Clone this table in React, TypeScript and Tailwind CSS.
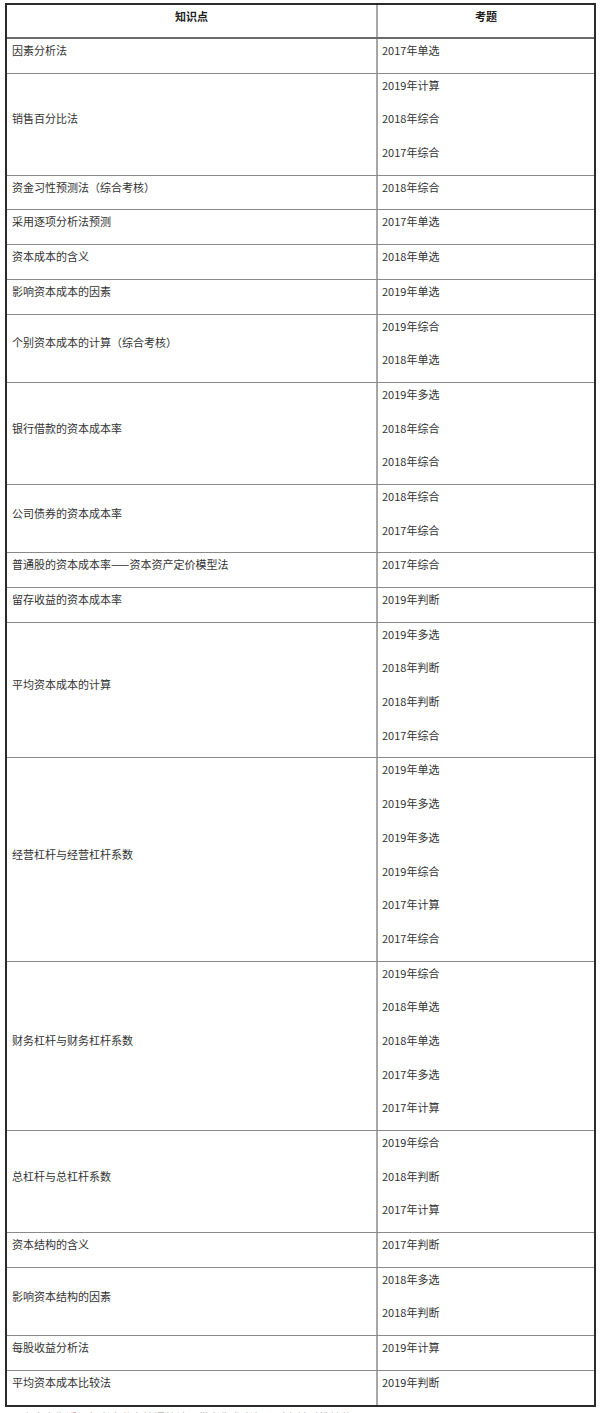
import React from "react";

type Row = { topic: string; items: string[] };

const rows: Row[] = [
  { topic: "因素分析法", items: ["2017年单选"] },
  { topic: "销售百分比法", items: ["2019年计算", "2018年综合", "2017年综合"] },
  { topic: "资金习性预测法（综合考核）", items: ["2018年综合"] },
  { topic: "采用逐项分析法预测", items: ["2017年单选"] },
  { topic: "资本成本的含义", items: ["2018年单选"] },
  { topic: "影响资本成本的因素", items: ["2019年单选"] },
  { topic: "个别资本成本的计算（综合考核）", items: ["2019年综合", "2018年单选"] },
  { topic: "银行借款的资本成本率", items: ["2019年多选", "2018年综合", "2018年综合"] },
  { topic: "公司债券的资本成本率", items: ["2018年综合", "2017年综合"] },
  { topic: "普通股的资本成本率——资本资产定价模型法", items: ["2017年综合"] },
  { topic: "留存收益的资本成本率", items: ["2019年判断"] },
  { topic: "平均资本成本的计算", items: ["2019年多选", "2018年判断", "2018年判断", "2017年综合"] },
  {
    topic: "经营杠杆与经营杠杆系数",
    items: ["2019年单选", "2019年多选", "2019年多选", "2019年综合", "2017年计算", "2017年综合"],
  },
  {
    topic: "财务杠杆与财务杠杆系数",
    items: ["2019年综合", "2018年单选", "2018年单选", "2017年多选", "2017年计算"],
  },
  { topic: "总杠杆与总杠杆系数", items: ["2019年综合", "2018年判断", "2017年计算"] },
  { topic: "资本结构的含义", items: ["2017年判断"] },
  { topic: "影响资本结构的因素", items: ["2018年多选", "2018年判断"] },
  { topic: "每股收益分析法", items: ["2019年计算"] },
  { topic: "平均资本成本比较法", items: ["2019年判断"] },
];

function Line({ children }: { children: React.ReactNode }) {
  return <div className="h-[33.7px] pt-[3px] leading-[17px] whitespace-nowrap">{children}</div>;
}

export default function App() {
  return (
    <div
      className="bg-white text-[11px] text-[#333] h-[1413px] overflow-hidden"
      style={{ fontFamily: '"Noto Sans CJK SC", "Noto Sans", sans-serif' }}
    >
      <div className="pt-[3px] pl-[5px]">
        <div className="w-[591px] border-2 border-[#2b2b2b]">
          {/* header */}
          <div className="grid grid-cols-[369px_2px_1fr] border-b-2 border-[#6a6a6a]">
            <div className="h-[32px] pt-[3px] leading-[17px] text-center font-bold text-[#222]">知识点</div>
            <div className="bg-[#a8a8a8]" />
            <div className="h-[32px] pt-[3px] leading-[17px] text-center font-bold text-[#222]">考题</div>
          </div>

          {rows.map((row, i) => (
            <div
              key={i}
              className={
                "grid grid-cols-[369px_2px_1fr] " + (i > 0 ? "border-t border-[#8a8a8a]" : "")
              }
            >
              <div className="flex items-center pl-[5px]">
                <Line>{row.topic}</Line>
              </div>
              <div className="bg-[#a8a8a8]" />
              <div className="pl-[4px]">
                {row.items.map((it, j) => (
                  <Line key={j}>{it}</Line>
                ))}
              </div>
            </div>
          ))}
        </div>
        <p className="mt-[2px] pl-[6px] leading-[17px] text-[#aaa] whitespace-nowrap">
          以上内容为<span className="text-[#d88]">近三年</span>考点分布情况统计，供考生参考复习时有针对性地使用。
        </p>
      </div>
    </div>
  );
}
